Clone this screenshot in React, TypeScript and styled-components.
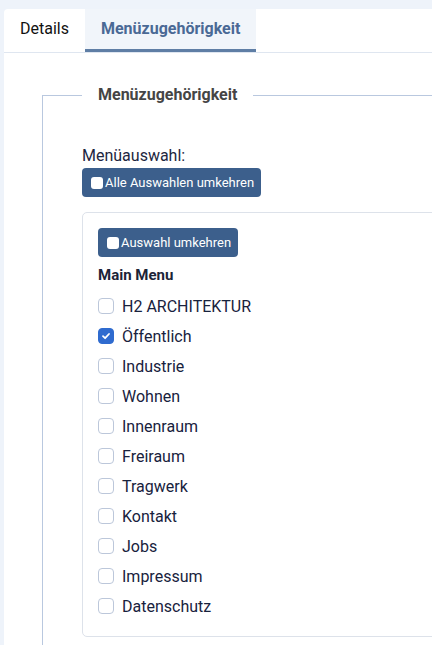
import React, { useState } from "react";
import styled, { createGlobalStyle } from "styled-components";

const GlobalStyle = createGlobalStyle`
  html, body {
    margin: 0;
    padding: 0;
    background: #eef3fa;
    overflow: hidden;
    font-family: Roboto, "Liberation Sans", Arial, sans-serif;
  }
  * { box-sizing: border-box; }
`;

const Page = styled.div`
  padding: 9px 0 0 4px;
  width: 820px;
`;

const Card = styled.div`
  background: #ffffff;
  border-radius: 4px 0 0 0;
  min-height: 660px;
`;

const TabBar = styled.div`
  display: flex;
  border-bottom: 1px solid #dfe6f0;
`;

const Tab = styled.button<{ $active?: boolean }>`
  height: 43px;
  padding: 0 16px;
  border: none;
  border-bottom: 3px solid ${(p) => (p.$active ? "#5f7ea5" : "transparent")};
  background: ${(p) => (p.$active ? "#f1f5fa" : "transparent")};
  color: ${(p) => (p.$active ? "#4a6995" : "#111111")};
  font-family: Roboto, "Liberation Sans", Arial, sans-serif;
  font-size: 16px;
  font-weight: ${(p) => (p.$active ? 700 : 400)};
  line-height: 24px;
  cursor: pointer;
  border-radius: ${(p) => (p.$active ? "0" : "4px 0 0 0")};
`;

const Content = styled.div`
  padding: 30px 0 0 38px;
`;

const Fieldset = styled.fieldset`
  margin: 0;
  border: none;
  border-top: 1px solid #b9c8df;
  border-left: 1px solid #b9c8df;
  padding: 37px 0 20px 39px;
  min-height: 600px;
`;

const Legend = styled.legend`
  padding: 0 16px;
  font-size: 16px;
  font-weight: 700;
  line-height: 24px;
  color: #454545;
`;

const FieldLabel = styled.div`
  font-size: 16px;
  line-height: 24px;
  color: #1d2640;
`;

const ActionButton = styled.button`
  display: inline-flex;
  align-items: center;
  gap: 2px;
  height: 29px;
  padding: 0 7px 0 9px;
  border: none;
  border-radius: 4px;
  background: #3c5f8c;
  color: #ffffff;
  font-family: Roboto, "Liberation Sans", Arial, sans-serif;
  font-size: 13px;
  line-height: 19px;
  cursor: pointer;
`;

const ButtonBox = styled.span`
  display: inline-block;
  width: 12px;
  height: 12px;
  border-radius: 3px;
  background: #ffffff;
`;

const MenuCard = styled.div`
  margin-top: 15px;
  border: 1px solid #dde2ea;
  border-radius: 5px;
  padding: 15px;
  width: 700px;
`;

const MenuTitle = styled.div`
  margin: 6px 0 4px;
  font-size: 15px;
  font-weight: 700;
  line-height: 24px;
  color: #1c2438;
`;

const ItemList = styled.div`
  display: flex;
  flex-direction: column;
`;

const Item = styled.label`
  display: flex;
  align-items: center;
  gap: 8px;
  height: 30px;
  font-size: 16px;
  color: #18223d;
  cursor: pointer;
`;

const Check = styled.span<{ $checked?: boolean }>`
  display: inline-flex;
  align-items: center;
  justify-content: center;
  width: 16px;
  height: 16px;
  border-radius: 4px;
  border: 1px solid ${(p) => (p.$checked ? "#2f6bcf" : "#bcc7da")};
  background: ${(p) => (p.$checked ? "#2f6bcf" : "#ffffff")};
`;

const items = [
  "H2 ARCHITEKTUR",
  "Öffentlich",
  "Industrie",
  "Wohnen",
  "Innenraum",
  "Freiraum",
  "Tragwerk",
  "Kontakt",
  "Jobs",
  "Impressum",
  "Datenschutz",
];

export default function App() {
  const [checked, setChecked] = useState<Record<string, boolean>>({ "Öffentlich": true });
  const toggle = (k: string) => setChecked((c) => ({ ...c, [k]: !c[k] }));
  return (
    <>
      <GlobalStyle />
      <Page>
        <Card>
          <TabBar>
            <Tab>Details</Tab>
            <Tab $active>Menüzugehörigkeit</Tab>
          </TabBar>
          <Content>
            <Fieldset>
              <Legend>Menüzugehörigkeit</Legend>
              <FieldLabel>Menüauswahl:</FieldLabel>
              <ActionButton>
                <ButtonBox />
                Alle Auswahlen umkehren
              </ActionButton>
              <MenuCard>
                <ActionButton>
                  <ButtonBox />
                  Auswahl umkehren
                </ActionButton>
                <MenuTitle>Main Menu</MenuTitle>
                <ItemList>
                  {items.map((it) => (
                    <Item key={it} onClick={() => toggle(it)}>
                      <Check $checked={!!checked[it]}>
                        {checked[it] && (
                          <svg width="10" height="10" viewBox="0 0 10 10">
                            <path
                              d="M2 5.2 L4.1 7.2 L8 3"
                              fill="none"
                              stroke="#ffffff"
                              strokeWidth="1.8"
                              strokeLinecap="round"
                              strokeLinejoin="round"
                            />
                          </svg>
                        )}
                      </Check>
                      {it}
                    </Item>
                  ))}
                </ItemList>
              </MenuCard>
            </Fieldset>
          </Content>
        </Card>
      </Page>
    </>
  );
}
